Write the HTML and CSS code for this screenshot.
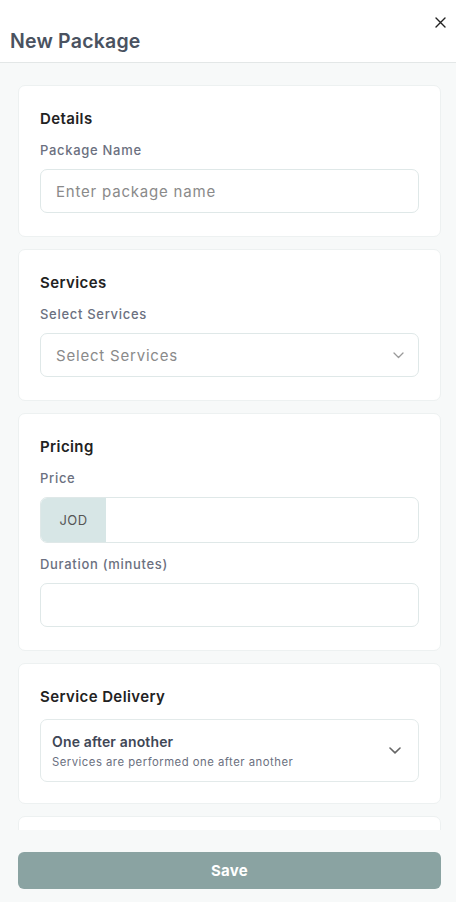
FILE: index.html
```html
<!DOCTYPE html>
<html lang="en">
<head>
<meta charset="utf-8">
<title>New Package</title>
<link rel="stylesheet" href="styles.css">
</head>
<body>
<div class="sheet">
  <header class="sheet-header">
    <h1 class="sheet-title">New Package</h1>
    <button class="close-btn" aria-label="Close">
      <svg width="11" height="11" viewBox="0 0 11 11"><path d="M1 1L10 10M10 1L1 10" stroke="#222" stroke-width="1.4" stroke-linecap="round"/></svg>
    </button>
  </header>

  <main class="sheet-body">
    <section class="card">
      <h2 class="card-title">Details</h2>
      <div class="field">
        <label class="field-label">Package Name</label>
        <div class="input"><span class="placeholder">Enter package name</span></div>
      </div>
    </section>

    <section class="card">
      <h2 class="card-title">Services</h2>
      <div class="field">
        <label class="field-label">Select Services</label>
        <div class="input select">
          <span class="placeholder">Select Services</span>
          <svg class="chev light" width="11" height="7" viewBox="0 0 11 7"><path d="M1 1L5.5 5.5L10 1" fill="none" stroke="#9a9a9a" stroke-width="1.3" stroke-linecap="round" stroke-linejoin="round"/></svg>
        </div>
      </div>
    </section>

    <section class="card">
      <h2 class="card-title">Pricing</h2>
      <div class="field">
        <label class="field-label">Price</label>
        <div class="input-group">
          <span class="addon">JOD</span>
          <span class="group-input"></span>
        </div>
      </div>
      <div class="field">
        <label class="field-label">Duration (minutes)</label>
        <div class="input"></div>
      </div>
    </section>

    <section class="card card-delivery">
      <h2 class="card-title">Service Delivery</h2>
      <div class="delivery">
        <div class="delivery-text">
          <div class="delivery-name">One after another</div>
          <div class="delivery-desc">Services are performed one after another</div>
        </div>
        <svg class="chev" width="12" height="7" viewBox="0 0 12 7"><path d="M1 1L6 5.8L11 1" fill="none" stroke="#666" stroke-width="1.6" stroke-linecap="round" stroke-linejoin="round"/></svg>
      </div>
    </section>

    <section class="card card-more"></section>
  </main>

  <footer class="sheet-footer">
    <button class="save-btn">Save</button>
  </footer>
</div>
</body>
</html>
```

FILE: styles.css
```css
* { box-sizing: border-box; }
html, body { margin: 0; padding: 0; height: 100%; }
body {
  font-family: "Inter", "Noto Sans", sans-serif;
  background: #f7f9f9;
  color: #222;
}
.sheet {
  height: 902px;
  display: flex;
  flex-direction: column;
}
.sheet-header {
  background: #fff;
  height: 63px;
  border-bottom: 1px solid #e3e7e7;
  display: flex;
  align-items: flex-end;
  justify-content: space-between;
  padding: 0 10px 9px 10px;
  position: relative;
}
.sheet-title {
  margin: 0;
  font-size: 19.5px;
  font-weight: 600;
  color: #4a5260;
  letter-spacing: 0.2px;
}
.close-btn {
  position: absolute;
  top: 17px;
  right: 10px;
  border: 0;
  background: none;
  padding: 0;
  width: 11px;
  height: 11px;
  display: flex;
}
.sheet-body {
  flex: 1;
  overflow: hidden;
  padding: 22px 15px 0 18px;
  display: flex;
  flex-direction: column;
  gap: 12px;
}
.card {
  flex-shrink: 0;
  background: #fff;
  border: 1px solid #edf1f1;
  border-radius: 7px;
  padding: 22px 21px 23px 21px;
}
.card-delivery { padding-bottom: 21px; }
.card-more { min-height: 80px; }
.card-title {
  margin: 0;
  font-size: 15px;
  font-weight: 600;
  line-height: 22px;
  color: #222;
  letter-spacing: 0.4px;
}
.field { margin-top: 11px; }
.field + .field { margin-top: 12px; }
.field-label {
  display: block;
  font-size: 13px;
  font-weight: 500;
  line-height: 18px;
  color: #6b7080;
  margin-bottom: 10px;
  letter-spacing: 0.7px;
}
.input {
  height: 44px;
  border: 1px solid #dfe8e8;
  border-radius: 7px;
  display: flex;
  align-items: center;
  padding: 0 15px;
  background: #fff;
}
.placeholder {
  font-size: 15px;
  color: #8a8a8a;
  letter-spacing: 0.8px;
}
.select { justify-content: space-between; padding-right: 14px; }
.input-group {
  height: 46px;
  border: 1px solid #dfe8e8;
  border-radius: 7px;
  display: flex;
  overflow: hidden;
}
.addon {
  width: 65px;
  background: #d7e6e6;
  display: flex;
  align-items: center;
  justify-content: center;
  font-size: 13px;
  color: #555;
  letter-spacing: 0.5px;
}
.group-input { flex: 1; }
.delivery {
  margin-top: 11px;
  height: 63px;
  border: 1px solid #e3eaea;
  border-radius: 7px;
  display: flex;
  align-items: center;
  justify-content: space-between;
  padding: 0 17px 0 11px;
}
.delivery-name {
  font-size: 14px;
  font-weight: 600;
  color: #3f4756;
  line-height: 20px;
  letter-spacing: 0.15px;
}
.delivery-desc {
  font-size: 11.3px;
  color: #6b7080;
  line-height: 16px;
  margin-top: 2px;
  letter-spacing: 0.5px;
}
.sheet-footer {
  padding: 22px 15px 13px 18px;
}
.save-btn {
  width: 100%;
  height: 37px;
  border: 0;
  border-radius: 6px;
  background: #8aa3a2;
  color: #fff;
  font-family: inherit;
  font-size: 15px;
  font-weight: 700;
  letter-spacing: 0.3px;
}
```
